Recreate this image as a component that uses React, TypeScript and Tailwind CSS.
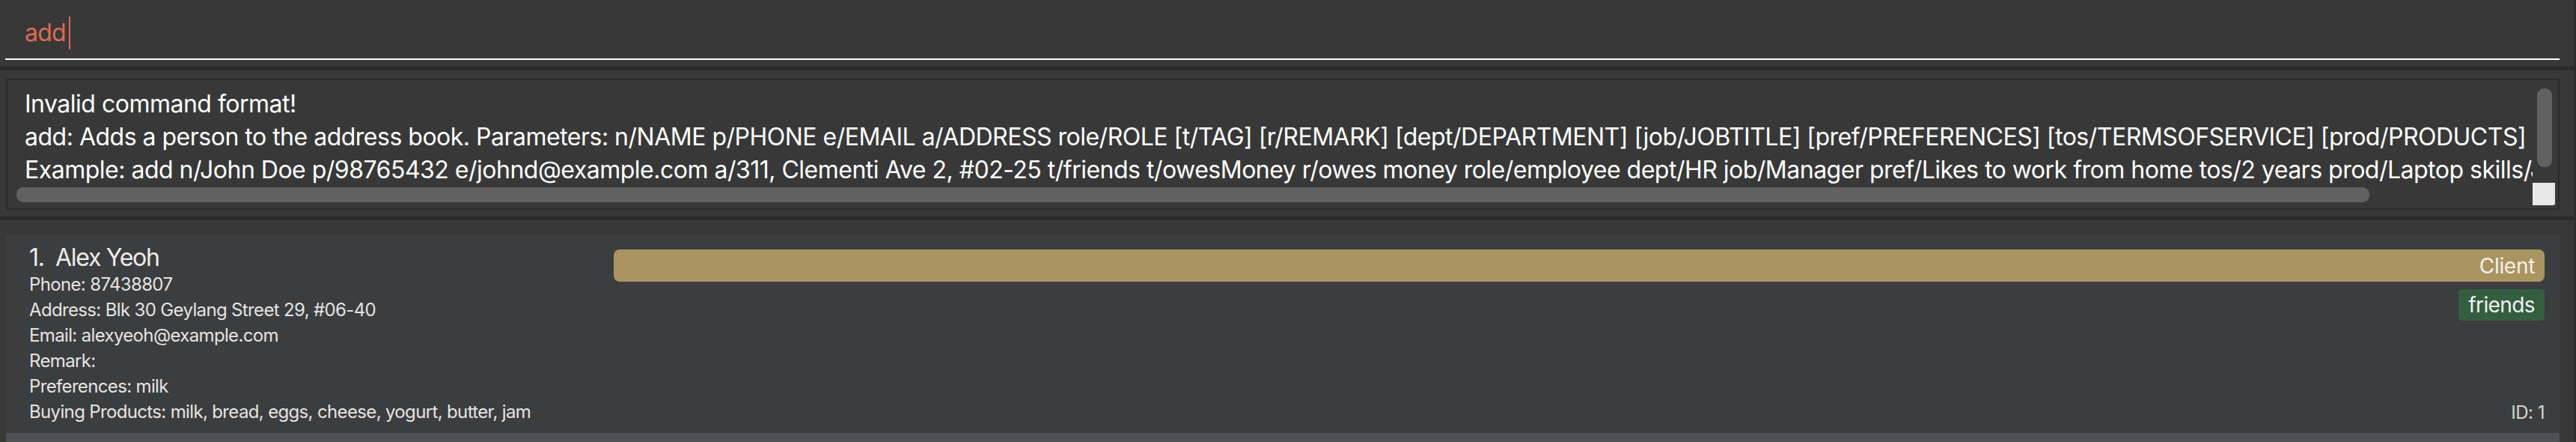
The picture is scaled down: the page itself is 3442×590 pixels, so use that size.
const usage =
  "add: Adds a person to the address book. Parameters: n/NAME p/PHONE e/EMAIL a/ADDRESS role/ROLE [t/TAG] [r/REMARK] [dept/DEPARTMENT] [job/JOBTITLE] [pref/PREFERENCES] [tos/TERMSOFSERVICE] [prod/PRODUCTS] [skills/SKILLS]";
const example =
  "Example: add n/John Doe p/98765432 e/johnd@example.com a/311, Clementi Ave 2, #02-25 t/friends t/owesMoney r/owes money role/employee dept/HR job/Manager pref/Likes to work from home tos/2 years prod/Laptop skills/Java";

const details = [
  "Phone: 87438807",
  "Address: Blk 30 Geylang Street 29, #06-40",
  "Email: alexyeoh@example.com",
  "Remark:",
  "Preferences: milk",
  "Buying Products: milk, bread, eggs, cheese, yogurt, butter, jam",
];

const App = () => {
  return (
    <div className="flex h-[590px] w-[3442px] flex-col overflow-hidden border-r-2 border-[#2b2b2b] bg-[#383838] font-['Inter',sans-serif]">
      {/* command box */}
      <div className="h-[89px] shrink-0 pl-[7px] pr-[20px]">
        <div className="flex h-[78px] items-start pl-[26px] pt-[22px]">
          <span className="text-[32px] leading-[44px] tracking-[-0.8px] text-[#dc6a52]">
            add
          </span>
          <span className="ml-[4px] h-[44px] w-[2px] bg-[#dc6a52]" />
        </div>
        <div className="h-[2px] bg-white" />
      </div>
      <div className="h-[5px] shrink-0 bg-[#2b2b2b]" />

      {/* result display */}
      <div className="shrink-0 pb-[9px] pl-[8px] pr-[20px] pt-[11px]">
        <div className="relative flex h-[175px] flex-col border-2 border-[#2b2b2b]">
          <div className="mr-[34px] overflow-hidden whitespace-nowrap pl-[23px] pt-[10px] text-[32px] leading-[44px] tracking-[-0.5px] text-white">
            <div>Invalid command format!</div>
            <div>{usage}</div>
            <div>{example}</div>
          </div>
          <div className="ml-[12px] mt-[1px] h-[20px] w-[3144px] rounded-[9px] bg-[#616161]" />
          <div className="absolute right-[8px] top-[11px] h-[105px] w-[20px] rounded-[9px] bg-[#616161]" />
          <div className="absolute right-[4px] top-[137px] h-[30px] w-[30px] rounded-br-[3px] bg-[#e8e8e8]" />
        </div>
      </div>
      <div className="h-[5px] shrink-0 bg-[#2b2b2b]" />

      {/* person list */}
      <div className="flex flex-col pl-[8px] pr-[20px] pt-[19px]">
        <div className="flex h-[265px] shrink-0 bg-[#3c3d3f] pl-[31px] pr-[20px]">
          <div className="flex w-[781px] shrink-0 flex-col pt-[11px]">
            <div className="whitespace-pre text-[32px] leading-[39px] tracking-[-1.3px] text-[#ececec]">
              1.  Alex Yeoh
            </div>
            {details.map((line) => (
              <div
                key={line}
                className="whitespace-nowrap text-[24px] leading-[34px] tracking-[-0.65px] text-[#e4e4e4]"
              >
                {line}
              </div>
            ))}
          </div>
          <div className="flex flex-1 flex-col items-end pb-[12px] pt-[20px]">
            <div className="flex h-[43px] w-full items-center justify-end rounded-[8px] bg-[#aa9460] pr-[13px] text-[28px] tracking-[-0.3px] text-[#f4f1ea]">
              Client
            </div>
            <div className="mt-[10px] flex h-[42px] items-center rounded-[5px] bg-[#345e40] px-[13px] text-[28px] tracking-[-0.6px] text-[#f2f2f2]">
              friends
            </div>
            <div className="mt-auto text-[24px] leading-[30px] tracking-[-0.5px] text-[#d4d4d4]">
              ID: 1
            </div>
          </div>
        </div>
        <div className="h-[40px] bg-[#4e5256]" />
      </div>
    </div>
  );
};

export default App;
